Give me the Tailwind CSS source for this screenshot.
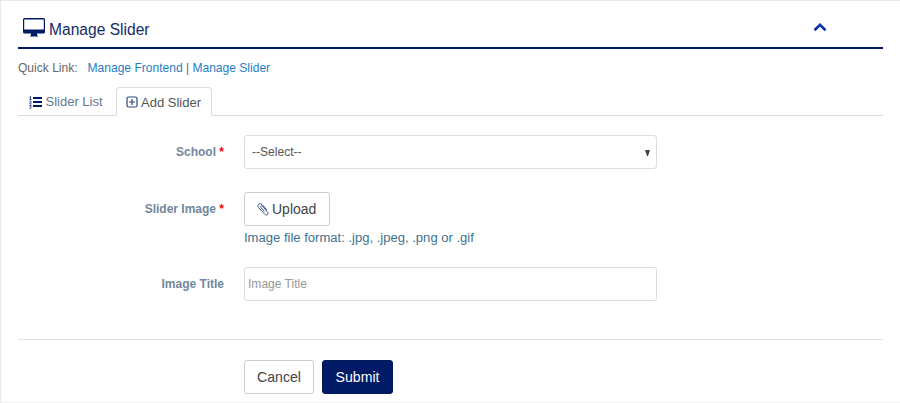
<!DOCTYPE html>
<html lang="en">
<head>
<meta charset="utf-8">
<title>Manage Slider</title>
<script src="https://cdn.jsdelivr.net/npm/@tailwindcss/browser@4"></script>
</head>
<body class="h-[403px] overflow-hidden bg-white font-['Liberation_Sans',Arial,sans-serif] text-[12.05px] text-[#666]">
<main class="flex h-[403px] flex-col border-t border-b border-l border-[#e6e9ed] border-b-[#f3f3f3] pr-[17px] pl-[17px]">
  <header class="flex h-[48px] shrink-0 border-b-2 border-[#001a66] pl-[5px]">
    <svg class="mt-[17px] h-[19px] w-[22px] shrink-0" viewBox="0 0 22 19" fill="#001a66"><path fill-rule="evenodd" d="M1.5 0h19Q22 0 22 1.500V14q0 1.500-1.500 1.500H14V17.500h1V18.500H7V17.500H8V15.500H1.500Q0 15.500 0 14V1.500Q0 0 1.500 0zM1.200 1.500V11.500H20.800V1.500z"/></svg>
    <h1 class="mt-[17px] ml-1 text-[15.6px] leading-6 text-[#142d68]">Manage Slider</h1>
    <svg class="mt-[21px] mr-[56px] ml-auto h-[10px] w-[14px]" viewBox="0 0 14 10" fill="none" stroke="#0a32b0" stroke-width="2.700"><path d="M1.500 8.200 7 2.900l5.500 5.300"/></svg>
  </header>
  <nav class="mt-[9px] flex h-5 shrink-0 items-center whitespace-pre">
    <span class="w-[69.500px]">Quick Link:</span><a class="text-[#1f80c4]">Manage Frontend</a><span> | </span><a class="text-[#1f80c4]">Manage Slider</a>
  </nav>
  <div class="flex h-[38px] shrink-0 items-end border-b border-[#ddd] text-[13px]">
    <div class="flex h-[28px] w-[98px] items-center pt-[2px] pl-[11px] text-[#66788f]">
      <svg class="mr-[3.500px] h-[13px] w-[13px]" viewBox="0 0 13 13" fill="none" stroke="#001a66"><path stroke-width="2" d="M4 2h9M4 6h9M4 10h9"/><path stroke-width=".8" d="M.5 1l1-.5v3M.5 3.500h2M.5 5.200h1.500v1L.6 7.900h1.900M.5 9.500h1.700L1.300 10.700q1.100 0 .9 1-.5 1-1.800.4"/></svg>Slider List
    </div>
    <div class="-mb-px flex h-[29px] w-[96px] items-center rounded-t border border-b-0 border-[#ddd] bg-white pt-px pl-[9px] text-[#555]">
      <svg class="mr-[3px] mb-px h-[12px] w-[12px]" viewBox="0 0 12 12" fill="none" stroke="#2d4780" stroke-width="1.200"><rect x="1" y="1" width="10" height="10" rx="1.500"/><path d="M3 6h6M6 3v6"/></svg>Add Slider
    </div>
  </div>
  <form class="flex flex-col">
    <div class="mt-[19px] flex h-[34px] items-center">
      <label class="w-[226px] pr-[20px] text-right text-[12px] font-bold text-[#73879c]">School <span class="text-[#f00]">*</span></label>
      <div class="flex h-[34px] w-[413px] items-center justify-between rounded-[3px] border border-[#ddd] pt-px pr-[6px] pl-[7px] text-[#555]">--Select--<svg class="h-[6px] w-[5px]" viewBox="0 0 5 6" fill="#444"><path d="M0 0h5L3 6H2z"/></svg></div>
    </div>
    <div class="mt-[23px] flex h-[34px] items-center">
      <label class="w-[226px] pr-[20px] text-right text-[12px] font-bold text-[#73879c]">Slider Image <span class="text-[#f00]">*</span></label>
      <button type="button" class="flex h-[34px] w-[86px] items-center rounded-[3px] border border-[#ccc] pl-[12px] text-[14px] text-[#444]"><svg class="mr-[3px] h-[13px] w-[12px]" viewBox="0 0 12 13" fill="none" stroke="#38548a" stroke-linecap="round"><path d="M7.200 8.300 4 4.500C3 3.200 4.600 2 5.600 3.200l5 6c1.400 2-1 4-2.600 2.200L1.400 4.400C-.4 2 2.800-.8 5 1.400l4.600 5.200"/></svg>Upload</button>
    </div>
    <p class="mt-[2px] ml-[226px] h-[20px] text-[13.05px] leading-[20px] text-[#3f718e]">Image file format: .jpg, .jpeg, .png or .gif</p>
    <div class="mt-[19px] flex h-[34px] items-center">
      <label class="w-[226px] pr-[20px] text-right text-[12px] font-bold text-[#73879c]">Image Title</label>
      <input class="h-[34px] w-[413px] rounded-[3px] border border-[#ddd] px-[3px] placeholder:text-[#999]" placeholder="Image Title">
    </div>
    <div class="mt-[38px] flex gap-2 border-t border-[#e2e2e2] pt-5 pl-[226px] text-[14.100px]">
      <button type="button" class="h-[34px] w-[70px] rounded-[3px] border border-[#ccc] pt-px text-[#444]">Cancel</button>
      <button type="button" class="h-[34px] w-[71px] rounded-[3px] border border-[#001a55] bg-[#001a66] pt-px text-white">Submit</button>
    </div>
  </form>
</main>
</body>
</html>
